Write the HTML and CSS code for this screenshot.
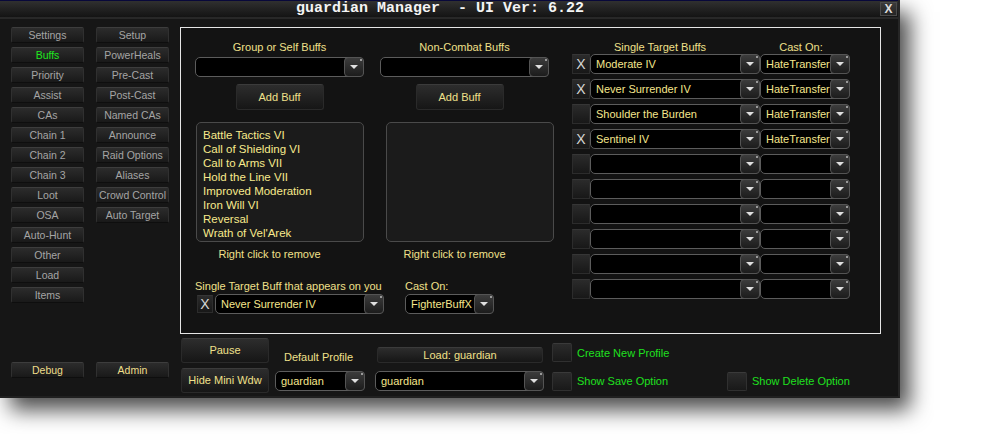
FILE: index.html
```html
<!DOCTYPE html>
<html lang="en">
<head>
  <meta charset="UTF-8" />
  <title>guardian Manager</title>
  <link rel="stylesheet" href="styles.css">
</head>
<body>

  <div class="window">
    <div class="titlebar">
      <span class="title">guardian Manager  - UI Ver: 6.22</span>
      <span class="close">X</span>
    </div>

    <div class="main">
      <aside class="sidebar">
        <div class="tabs">
          <div class="tab">Settings</div>
          <div class="tab active">Buffs</div>
          <div class="tab">Priority</div>
          <div class="tab">Assist</div>
          <div class="tab">CAs</div>
          <div class="tab">Chain 1</div>
          <div class="tab">Chain 2</div>
          <div class="tab">Chain 3</div>
          <div class="tab">Loot</div>
          <div class="tab">OSA</div>
          <div class="tab">Auto-Hunt</div>
          <div class="tab">Other</div>
          <div class="tab">Load</div>
          <div class="tab">Items</div>
          <div class="tab">Setup</div>
          <div class="tab">PowerHeals</div>
          <div class="tab">Pre-Cast</div>
          <div class="tab">Post-Cast</div>
          <div class="tab">Named CAs</div>
          <div class="tab">Announce</div>
          <div class="tab">Raid Options</div>
          <div class="tab">Aliases</div>
          <div class="tab">Crowd Control</div>
          <div class="tab">Auto Target</div>
        </div>
        <div class="tabs tabs-bottom">
          <div class="tab gold">Debug</div>
          <div class="tab gold">Admin</div>
        </div>
      </aside>

      <div class="content">
        <section class="panel">
          <div class="buffs">
            <div class="buff-cols">
              <div class="buff-col">
                <div class="label">Group or Self Buffs</div>
                <div class="combo"><span class="combo-text"></span><span class="combo-btn"></span></div>
                <div class="btn add">Add Buff</div>
                <div class="listbox first">
                  <div class="list-item">Battle Tactics VI</div>
                  <div class="list-item">Call of Shielding VI</div>
                  <div class="list-item">Call to Arms VII</div>
                  <div class="list-item">Hold the Line VII</div>
                  <div class="list-item">Improved Moderation</div>
                  <div class="list-item">Iron Will VI</div>
                  <div class="list-item">Reversal</div>
                  <div class="list-item">Wrath of Vel'Arek</div>
                </div>
                <div class="label hint">Right click to remove</div>
              </div>
              <div class="buff-col">
                <div class="label">Non-Combat Buffs</div>
                <div class="combo"><span class="combo-text"></span><span class="combo-btn"></span></div>
                <div class="btn add shifted">Add Buff</div>
                <div class="listbox second"></div>
                <div class="label hint">Right click to remove</div>
              </div>
            </div>

            <div class="self-row">
              <div>
                <div class="label">Single Target Buff that appears on you</div>
                <div class="self-ctrl">
                  <div class="xbox small">X</div>
                  <div class="combo"><span class="combo-text">Never Surrender IV</span><span class="combo-btn"></span></div>
                </div>
              </div>
              <div>
                <div class="label">Cast On:</div>
                <div class="self-ctrl">
                  <div class="combo cast-self"><span class="combo-text">FighterBuffX</span><span class="combo-btn"></span></div>
                </div>
              </div>
            </div>
          </div>

          <div class="single">
            <div class="st-head">
              <span></span>
              <div class="label st-title">Single Target Buffs</div>
              <div class="label st-cast">Cast On:</div>
            </div>
            <div class="st-rows">
              <div class="xbox">X</div>
              <div class="combo"><span class="combo-text">Moderate IV</span><span class="combo-btn"></span></div>
              <div class="combo"><span class="combo-text">HateTransfer</span><span class="combo-btn"></span></div>

              <div class="xbox">X</div>
              <div class="combo"><span class="combo-text">Never Surrender IV</span><span class="combo-btn"></span></div>
              <div class="combo"><span class="combo-text">HateTransfer</span><span class="combo-btn"></span></div>

              <div class="xbox"></div>
              <div class="combo"><span class="combo-text">Shoulder the Burden</span><span class="combo-btn"></span></div>
              <div class="combo"><span class="combo-text">HateTransfer</span><span class="combo-btn"></span></div>

              <div class="xbox">X</div>
              <div class="combo"><span class="combo-text">Sentinel IV</span><span class="combo-btn"></span></div>
              <div class="combo"><span class="combo-text">HateTransfer</span><span class="combo-btn"></span></div>

              <div class="xbox"></div>
              <div class="combo"><span class="combo-text"></span><span class="combo-btn"></span></div>
              <div class="combo"><span class="combo-text"></span><span class="combo-btn"></span></div>

              <div class="xbox"></div>
              <div class="combo"><span class="combo-text"></span><span class="combo-btn"></span></div>
              <div class="combo"><span class="combo-text"></span><span class="combo-btn"></span></div>

              <div class="xbox"></div>
              <div class="combo"><span class="combo-text"></span><span class="combo-btn"></span></div>
              <div class="combo"><span class="combo-text"></span><span class="combo-btn"></span></div>

              <div class="xbox"></div>
              <div class="combo"><span class="combo-text"></span><span class="combo-btn"></span></div>
              <div class="combo"><span class="combo-text"></span><span class="combo-btn"></span></div>

              <div class="xbox"></div>
              <div class="combo"><span class="combo-text"></span><span class="combo-btn"></span></div>
              <div class="combo"><span class="combo-text"></span><span class="combo-btn"></span></div>

              <div class="xbox"></div>
              <div class="combo"><span class="combo-text"></span><span class="combo-btn"></span></div>
              <div class="combo"><span class="combo-text"></span><span class="combo-btn"></span></div>
            </div>
          </div>
        </section>

        <div class="footer">
          <div class="btn foot-btn">Pause</div>
          <div class="label profile-label">Default Profile</div>
          <div class="btn load-btn">Load: guardian</div>
          <div class="check top"></div>
          <div class="label green create">Create New Profile</div>

          <div class="btn foot-btn">Hide Mini Wdw</div>
          <div class="combo profile-combo"><span class="combo-text">guardian</span><span class="combo-btn"></span></div>
          <div class="combo"><span class="combo-text">guardian</span><span class="combo-btn"></span></div>
          <div class="check"></div>
          <div class="label green">Show Save Option</div>
          <div class="check"></div>
          <div class="label green">Show Delete Option</div>
        </div>
      </div>
    </div>
  </div>

</body>
</html>
```

FILE: styles.css
```css
* {
  box-sizing: border-box;
}

html,
body {
  min-height: 440px;
}

body {
  margin: 0;
  background-color: #fff;
  font-family: 'Liberation Sans', Arial, sans-serif;
  font-size: 11px;
}

.window {
  width: 900px;
  height: 398px;
  background-color: #161616;
  border-right: 2px solid #262626;
  border-bottom: 2px solid #202020;
  box-shadow: 10px 12px 20px rgba(0, 0, 0, 0.7);
  display: flex;
  flex-direction: column;
}

/* title bar */
.titlebar {
  height: 17px;
  border-top: 1px solid #08083a;
  background: linear-gradient(#303030, #1f1f1f 60%, #141414);
  display: flex;
  align-items: center;
}

.title {
  flex: 1;
  text-align: center;
  white-space: pre;
  font: bold 15px 'Liberation Mono', monospace;
  line-height: 16px;
  color: #f4f4f4;
}

.close {
  width: 17px;
  height: 14px;
  margin-right: 1px;
  background: linear-gradient(#3a3a3a, #252525);
  border: 1px solid #4a4a4a;
  color: #dcdcdc;
  font: bold 12px 'Liberation Sans', sans-serif;
  line-height: 12px;
  text-align: center;
}

.main {
  flex: 1;
  display: flex;
  border-top: 2px solid #282828;
  padding-top: 8px;
}

/* left menu */
.sidebar {
  width: 180px;
  padding: 0 0 18px 11px;
  display: flex;
  flex-direction: column;
  justify-content: space-between;
}

.tabs {
  display: grid;
  grid-template-columns: 73px 73px;
  grid-template-rows: repeat(14, 16px);
  grid-auto-flow: column;
  column-gap: 12px;
  row-gap: 4px;
}

.tabs-bottom {
  grid-template-rows: 16px;
}

.tab {
  background: linear-gradient(#2c2c2c, #191919);
  border: 1px solid #303030;
  border-top-color: #3d3d3d;
  border-bottom-color: #0e0e0e;
  border-radius: 2px;
  color: #a5a5a5;
  font-size: 10.5px;
  line-height: 15px;
  text-align: center;
  white-space: nowrap;
}

.tab.active {
  color: #1fe81f;
}

.tab.gold {
  color: #efdf8a;
}

/* main panel */
.content {
  display: flex;
  flex-direction: column;
}

.panel {
  width: 701px;
  height: 307px;
  border: 1px solid #e6e6e6;
  background-color: #131313;
  display: flex;
}

.label {
  color: #f0e08a;
  line-height: 14px;
  white-space: nowrap;
}

.buffs {
  width: 368px;
  padding-left: 14px;
}

.buff-cols {
  display: grid;
  grid-template-columns: 169px 169px;
  column-gap: 16px;
}

.buff-col {
  display: flex;
  flex-direction: column;
  align-items: center;
}

.buff-col .label {
  margin-top: 12px;
}

.buff-col .combo {
  margin-top: 3px;
}

.buff-col .hint {
  margin-top: 5px;
  margin-right: 20px;
}

/* combo box */
.combo {
  display: flex;
  width: 100%;
  height: 20px;
  background-color: #000;
  border: 1px solid #5c5c5c;
  border-radius: 5px;
}

.combo-text {
  flex: 1;
  padding-left: 5px;
  color: #f5e68c;
  line-height: 18px;
  overflow: hidden;
  white-space: nowrap;
}

.combo-btn {
  position: relative;
  width: 20px;
  margin: -1px -1px -1px 0;
  border: 1px solid #545454;
  border-radius: 4px;
  background: linear-gradient(#3c3c3c, #1c1c1c);
}

.combo-btn::after {
  content: "";
  position: absolute;
  left: 5px;
  top: 7px;
  border-left: 4px solid transparent;
  border-right: 4px solid transparent;
  border-top: 4px solid #e0e0e0;
}

.combo-btn::before {
  content: "";
  position: absolute;
  right: 1px;
  top: 1px;
  width: 2px;
  height: 2px;
  background-color: #9a9a9a;
}

.btn {
  width: 88px;
  height: 26px;
  background: linear-gradient(#2d2d2d, #161616);
  border: 1px solid #2a2a2a;
  border-top-color: #3b3b3b;
  border-radius: 3px;
  color: #f0e08a;
  line-height: 24px;
  text-align: center;
  white-space: nowrap;
}

.btn.add {
  margin-top: 7px;
}

.btn.shifted {
  margin-right: 10px;
}

.listbox {
  width: 168px;
  height: 120px;
  margin-top: 12px;
  padding: 5px 0 0 6px;
  background-color: #1b1b1b;
  border: 1px solid #4a4a4a;
  border-radius: 5px;
}

.listbox.first {
  align-self: flex-end;
}

.listbox.second {
  align-self: flex-start;
  margin-left: 6px;
}

.list-item {
  color: #f8ea8c;
  font-size: 11.5px;
  line-height: 14px;
}

.self-row {
  display: grid;
  grid-template-columns: 190px 100px;
  column-gap: 20px;
  margin-top: 18px;
}

.self-ctrl {
  display: flex;
  margin-top: 1px;
}

.cast-self {
  width: 89px;
}

.xbox {
  height: 20px;
  background: linear-gradient(#2b2b2b, #181818);
  border: 1px solid #2c2c2c;
  border-top-color: #363636;
  color: #d6d6d6;
  font-size: 14px;
  line-height: 18px;
  text-align: center;
}

.xbox.small {
  width: 16px;
  height: 18px;
  margin: 1px 2px 0 2px;
  line-height: 16px;
}

.self-ctrl .combo {
  flex: 1;
  margin-right: 1px;
}

.self-ctrl .cast-self {
  flex: none;
}

/* single target buffs */
.single {
  margin-left: 23px;
}

.st-head,
.st-rows {
  display: grid;
  grid-template-columns: 18px 170px 90px;
}

.st-head {
  margin-top: 12px;
}

.st-title {
  text-align: center;
  padding-right: 30px;
}

.st-cast {
  text-align: center;
  padding-right: 8px;
}

.st-rows {
  grid-auto-rows: 20px;
  row-gap: 5px;
}

/* footer */
.footer {
  display: grid;
  grid-template-columns: 94px 100px 177px 25px 150px 25px auto;
  grid-template-rows: 26px 26px;
  row-gap: 4px;
  margin-top: 4px;
  margin-left: 1px;
}

.foot-btn {
  height: 25px;
  line-height: 23px;
}

.profile-label {
  align-self: end;
  padding-left: 9px;
}

.load-btn {
  width: 166px;
  height: 16px;
  margin: 0 0 1px 2px;
  align-self: end;
  line-height: 14px;
}

.check {
  width: 20px;
  height: 19px;
  align-self: center;
  background: linear-gradient(#2b2b2b, #191919);
  border: 1px solid #303030;
  border-top-color: #3a3a3a;
  border-radius: 2px;
}

.check.top {
  align-self: end;
  margin-bottom: 2px;
}

.green {
  color: #1fe01f;
  align-self: center;
}

.create {
  grid-column: span 3;
  align-self: end;
  margin-bottom: 4px;
}

.footer .combo {
  width: 169px;
  align-self: center;
}

.footer .profile-combo {
  width: 90px;
}
```
